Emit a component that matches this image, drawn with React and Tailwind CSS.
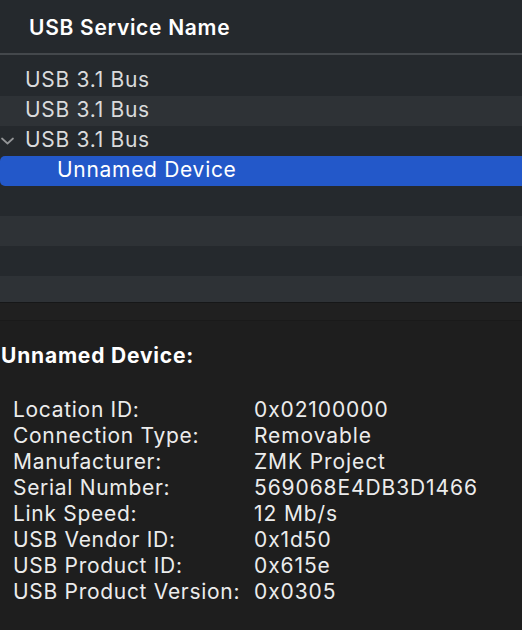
import React from "react";

const rows = [
  { label: "Location ID:", value: "0x02100000" },
  { label: "Connection Type:", value: "Removable" },
  { label: "Manufacturer:", value: "ZMK Project" },
  { label: "Serial Number:", value: "569068E4DB3D1466" },
  { label: "Link Speed:", value: "12 Mb/s" },
  { label: "USB Vendor ID:", value: "0x1d50" },
  { label: "USB Product ID:", value: "0x615e" },
  { label: "USB Product Version:", value: "0x0305" },
];

function Chevron() {
  return (
    <svg width="13" height="8" viewBox="0 0 13 8" className="absolute left-[1px] top-[11px]">
      <path d="M1 1.5 L6.5 6.5 L12 1.5" fill="none" stroke="#939597" strokeWidth="1.7" strokeLinecap="round" strokeLinejoin="round" />
    </svg>
  );
}

export default function App() {
  return (
    <div
      className="w-[522px] h-[630px] overflow-hidden flex flex-col bg-[#1e1e1e]"
      style={{ fontFamily: "Inter, 'Noto Sans', sans-serif" }}
    >
      <div className="h-[302px] bg-[#25292d] flex flex-col shrink-0">
        <div className="h-[53px] flex items-center pl-[29px] pt-[2px] text-[21px] font-semibold text-white tracking-[0.7px]">
          USB Service Name
        </div>
        <div className="h-[2px] bg-[#44484c]" />
        <div className="h-[11px]" />
        <div className="h-[30px] flex items-center pl-[25px] pb-[2px] text-[21px] tracking-[0.7px] text-[#dadbdc]">USB 3.1 Bus</div>
        <div className="h-[30px] flex items-center pl-[25px] pb-[2px] text-[21px] tracking-[0.7px] text-[#dadbdc] bg-[#2e3236]">USB 3.1 Bus</div>
        <div className="relative h-[30px] flex items-center pl-[25px] pb-[2px] text-[21px] tracking-[0.7px] text-[#dadbdc]">
          <Chevron />
          USB 3.1 Bus
        </div>
        <div className="h-[30px] flex items-center pl-[57px] pb-[2px] text-[21px] tracking-[0.7px] text-white bg-[#2358c9] rounded-l-[5px]">
          Unnamed Device
        </div>
        <div className="h-[30px]" />
        <div className="h-[30px] bg-[#2e3236]" />
        <div className="h-[30px]" />
        <div className="flex-1 bg-[#2e3236]" />
      </div>
      <div className="h-[1px] bg-[#161718] shrink-0" />
      <div className="h-[17px] bg-[#202020] shrink-0" />
      <div className="h-[1px] bg-[#1a1a1a] shrink-0" />
      <div className="flex-1 bg-[#1e1e1e] text-[#ececec]">
        <div className="pl-[1px] pt-[22px] text-[21px] font-bold text-white leading-[26px] tracking-[0.8px]">Unnamed Device:</div>
        <div className="pt-[28px] pl-[13px] flex flex-col">
          {rows.map((r) => (
            <div key={r.label} className="flex h-[26px] items-center text-[21px] tracking-[0.7px]">
              <div className="w-[241px] shrink-0">{r.label}</div>
              <div className="tracking-[0.9px]">{r.value}</div>
            </div>
          ))}
        </div>
      </div>
    </div>
  );
}
